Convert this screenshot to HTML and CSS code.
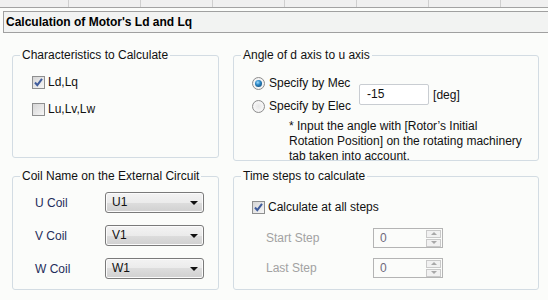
FILE: index.html
```html
<!DOCTYPE html>
<html>
<head>
<meta charset="utf-8">
<link rel="stylesheet" href="styles.css">
</head>
<body>
<div class="tabs"></div>
<div class="title">Calculation of Motor's Ld and Lq</div>
<div class="grid">
  <fieldset class="box b1">
    <legend>Characteristics to Calculate</legend>
    <div class="chk first"><span class="cb on"><svg width="11" height="11" viewBox="0 0 11 11"><path d="M2 5.5 L4.3 8.2 L9 1.8" fill="none" stroke="#3f5c9c" stroke-width="2"/></svg></span>Ld,Lq</div>
    <div class="chk second"><span class="cb"></span>Lu,Lv,Lw</div>
  </fieldset>
  <fieldset class="box b2">
    <legend>Angle of d axis to u axis</legend>
    <div class="angle">
      <div class="radios">
        <div class="rad"><span class="rb on"></span>Specify by Mec</div>
        <div class="rad"><span class="rb"></span>Specify by Elec</div>
      </div>
      <div class="field">-15</div>
      <span class="unit">[deg]</span>
    </div>
    <p class="note">* Input the angle with [Rotor’s Initial<br>Rotation Position] on the rotating machinery<br>tab taken into account.</p>
  </fieldset>
  <fieldset class="box b3">
    <legend>Coil Name on the External Circuit</legend>
    <div class="coil"><span class="clabel">U Coil</span><div class="combo">U1<span class="arrow"></span></div></div>
    <div class="coil"><span class="clabel">V Coil</span><div class="combo">V1<span class="arrow"></span></div></div>
    <div class="coil"><span class="clabel">W Coil</span><div class="combo">W1<span class="arrow"></span></div></div>
  </fieldset>
  <fieldset class="box b4">
    <legend>Time steps to calculate</legend>
    <div class="chk allsteps"><span class="cb on"><svg width="11" height="11" viewBox="0 0 11 11"><path d="M2 5.5 L4.3 8.2 L9 1.8" fill="none" stroke="#3f5c9c" stroke-width="2"/></svg></span>Calculate at all steps</div>
    <div class="step"><span class="slabel">Start Step</span><div class="spin"><span class="sval">0</span><span class="sbtns"><span class="sb up"></span><span class="sb down"></span></span></div></div>
    <div class="step"><span class="slabel">Last Step</span><div class="spin"><span class="sval">0</span><span class="sbtns"><span class="sb up"></span><span class="sb down"></span></span></div></div>
  </fieldset>
</div>
</body>
</html>
```
FILE: styles.css
```css
html, body { margin: 0; padding: 0; }
body {
  width: 548px; height: 300px; overflow: hidden;
  background: #fbfcfa;
  font-family: "Liberation Sans", Arial, sans-serif;
  font-size: 12px;
  color: #111;
}
.tabs {
  height: 7px;
  border-bottom: 1px solid #a3a3a3;
  background-color: #f0f0f0;
  background-image: repeating-linear-gradient(90deg, transparent 0 68px, #cfcfcf 68px 69px, transparent 69px 72px);
}
.title {
  margin: 3px 0 0 3px;
  height: 22px;
  box-sizing: border-box;
  border: 1px solid #a0a0a0;
  border-right: none;
  background: #f2f3f2;
  font-weight: bold;
  font-size: 12px;
  line-height: 20px;
  padding-left: 2px;
  color: #000;
}
.grid {
  display: grid;
  grid-template-columns: 207px 306px;
  column-gap: 14px;
  row-gap: 8px;
  align-items: start;
  margin: 15px 0 0 12px;
}
.box {
  margin: 0; padding: 0;
  border: 1px solid #d3dce3;
  border-radius: 3px;
  box-sizing: border-box;
  min-width: 0;
}
.box legend {
  margin-left: 7px;
  padding: 0 2px;
  line-height: 14px;
  color: #111;
}
.b1 { height: 110px; }
.b2 { height: 113px; }
.b3, .b4 { height: 121px; }

.chk { display: flex; align-items: center; height: 16px; }
.cb {
  width: 13px; height: 13px; box-sizing: border-box;
  border: 1px solid #8e8f8f;
  background: linear-gradient(135deg, #d6d6d6, #f6f6f6);
  margin-right: 3px;
  display: flex; align-items: center; justify-content: center;
}
.cb svg { display: block; }
.b1 .chk { padding-left: 19px; }
.b1 .first { margin-top: 12px; }
.b1 .second { margin-top: 11px; }

.angle { display: flex; align-items: center; padding-left: 18px; margin-top: 13px; }
.radios { display: flex; flex-direction: column; row-gap: 7px; }
.rad { display: flex; align-items: center; height: 16px; }
.rb {
  width: 13px; height: 13px; box-sizing: border-box; border-radius: 50%;
  border: 1px solid #8d8d8d;
  background: radial-gradient(circle at 50% 50%, #e6e6e6 0, #f6f6f6 60%, #dcdcdc 100%);
  margin-right: 4px;
  display: flex; align-items: center; justify-content: center;
}
.rb.on::after {
  content: "";
  width: 7px; height: 7px; border-radius: 50%;
  background: radial-gradient(circle at 40% 35%, #9fdcff 0, #2a86c4 40%, #0d3a63 100%);
}
.field {
  margin-left: 8px;
  width: 70px; height: 21px; box-sizing: border-box;
  border: 1px solid #c9cdd2;
  border-radius: 2px;
  background: #fff;
  line-height: 19px;
  padding-left: 7px;
  color: #111;
}
.unit { margin-left: 4px; }
.note { margin: 5px 0 0 55px; line-height: 15px; }

.coil { display: flex; align-items: center; padding-left: 22px; height: 21px; }
.coil:first-of-type { margin-top: 9px; }
.coil + .coil { margin-top: 12px; }
.clabel { width: 70px; color: #1f2d5a; }
.combo {
  position: relative;
  width: 99px; height: 21px; box-sizing: border-box;
  border: 1px solid #7a7a7a;
  border-radius: 3px;
  background: linear-gradient(#f3f3f3 0, #ebebeb 50%, #dddddd 50%, #d0d0d0 100%);
  box-shadow: inset 0 0 0 1px #fbfbfb;
  line-height: 19px;
  padding-left: 6px;
  color: #111;
}
.arrow {
  position: absolute; right: 5px; top: 8px;
  width: 0; height: 0;
  border-left: 4px solid transparent;
  border-right: 4px solid transparent;
  border-top: 4px solid #111;
}
.allsteps { padding-left: 18px; margin-top: 16px; }
.step { display: flex; align-items: center; padding-left: 32px; height: 20px; color: #a2a2a2; }
.allsteps + .step { margin-top: 13px; }
.step + .step { margin-top: 10px; }
.slabel { width: 107px; }
.spin {
  display: flex; align-items: center; justify-content: space-between;
  width: 70px; height: 20px; box-sizing: border-box;
  border: 1px solid #b4b4b4;
  background: #fbfcfa;
  padding: 0 1px 0 6px;
}
.sval { color: #6f6a7a; }
.sbtns { display: flex; flex-direction: column; gap: 1px; }
.sb {
  width: 15px; height: 8px; box-sizing: border-box;
  border: 1px solid #c9c9c9;
  background: #f1f1f1;
  display: flex; align-items: center; justify-content: center;
}
.sb::after {
  content: ""; width: 0; height: 0;
  border-left: 3px solid transparent; border-right: 3px solid transparent;
}
.sb.up::after { border-bottom: 3px solid #a8a8a8; }
.sb.down::after { border-top: 3px solid #a8a8a8; }
```
